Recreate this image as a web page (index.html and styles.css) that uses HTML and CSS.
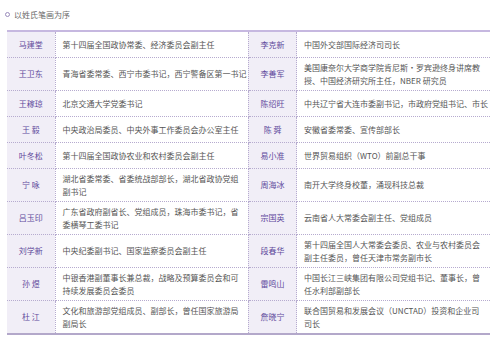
FILE: index.html
```html
<!DOCTYPE html>
<html lang="zh">
<head>
  <meta charset="UTF-8" />
  <title>委员名单</title>
  <link rel="stylesheet" href="styles.css">
</head>
<body>
  <div class="page">
    <div class="note"><span class="dot"></span>以姓氏笔画为序</div>

    <table class="members">
      <colgroup>
        <col class="c-name"><col class="c-desc"><col class="c-name"><col class="c-desc">
      </colgroup>
      <tr>
        <td class="name">马建堂</td>
        <td>第十四届全国政协常委、经济委员会副主任</td>
        <td class="name">李克新</td>
        <td>中国外交部国际经济司司长</td>
      </tr>
      <tr>
        <td class="name">王卫东</td>
        <td class="oneline">青海省委常委、西宁市委书记，西宁警备区第一书记</td>
        <td class="name">李善军</td>
        <td>美国康奈尔大学商学院肯尼斯•罗宾逊终身讲席教<br>授、中国经济研究所主任，NBER 研究员</td>
      </tr>
      <tr>
        <td class="name">王稼琼</td>
        <td>北京交通大学党委书记</td>
        <td class="name">陈绍旺</td>
        <td class="oneline">中共辽宁省大连市委副书记，市政府党组书记、市长</td>
      </tr>
      <tr>
        <td class="name">王 毅</td>
        <td>中央政治局委员、中央外事工作委员会办公室主任</td>
        <td class="name">陈 舜</td>
        <td>安徽省委常委、宣传部部长</td>
      </tr>
      <tr>
        <td class="name">叶冬松</td>
        <td>第十四届全国政协农业和农村委员会副主任</td>
        <td class="name">易小准</td>
        <td>世界贸易组织（WTO）前副总干事</td>
      </tr>
      <tr>
        <td class="name">宁 咏</td>
        <td>湖北省委常委、省委统战部部长，湖北省政协党组副书记</td>
        <td class="name">周海冰</td>
        <td>南开大学终身校董，涌现科技总裁</td>
      </tr>
      <tr>
        <td class="name">吕玉印</td>
        <td>广东省政府副省长、党组成员，珠海市委书记，省委横琴工委书记</td>
        <td class="name">宗国英</td>
        <td>云南省人大常委会副主任、党组成员</td>
      </tr>
      <tr>
        <td class="name">刘学新</td>
        <td>中央纪委副书记、国家监察委员会副主任</td>
        <td class="name">段春华</td>
        <td>第十四届全国人大常委会委员、农业与农村委员会副主任委员，曾任天津市常务副市长</td>
      </tr>
      <tr>
        <td class="name">孙 煜</td>
        <td>中银香港副董事长兼总裁，战略及预算委员会和可持续发展委员会委员</td>
        <td class="name">雷鸣山</td>
        <td>中国长江三峡集团有限公司党组书记、董事长，曾任水利部副部长</td>
      </tr>
      <tr>
        <td class="name">杜 江</td>
        <td>文化和旅游部党组成员、副部长，曾任国家旅游局副局长</td>
        <td class="name">詹晓宁</td>
        <td>联合国贸易和发展会议（UNCTAD）投资和企业司司长</td>
      </tr>
    </table>
  </div>
</body>
</html>
```

FILE: styles.css
```css
body {
  margin: 0;
  background-color: #fff;
  font-family: "Noto Sans CJK SC", "Noto Sans", sans-serif;
}

.page {
  padding: 8px 9px 8px 5px;
}

.note {
  display: flex;
  align-items: center;
  gap: 4px;
  height: 13px;
  font-size: 8px;
  color: #6b6b6b;
}

.dot {
  width: 3px;
  height: 3px;
  border: 1px solid #9a8cbc;
  border-radius: 50%;
}

.members {
  margin: 9px 0 0 2px;
  width: 483px;
  table-layout: fixed;
  border-collapse: collapse;
  border-top: 2px solid #c6b8e0;
  border-bottom: 2px solid #b3a8ca;
}

.c-name { width: 48px; }
.c-desc { width: 193px; }

.members tr { height: 26px; }

.members td {
  padding: 3px 7px;
  border: 1px dotted #b6abcf;
  font-size: 8px;
  line-height: 13px;
  color: #555;
  vertical-align: middle;
}

.members tr td:first-child { border-left: none; }
.members tr td:last-child { border-right: none; }

.members td.oneline { white-space: nowrap; }

.members td.name {
  padding: 3px 2px;
  text-align: center;
  color: #5f4a9c;
  background-color: #f1eef7;
}
```
